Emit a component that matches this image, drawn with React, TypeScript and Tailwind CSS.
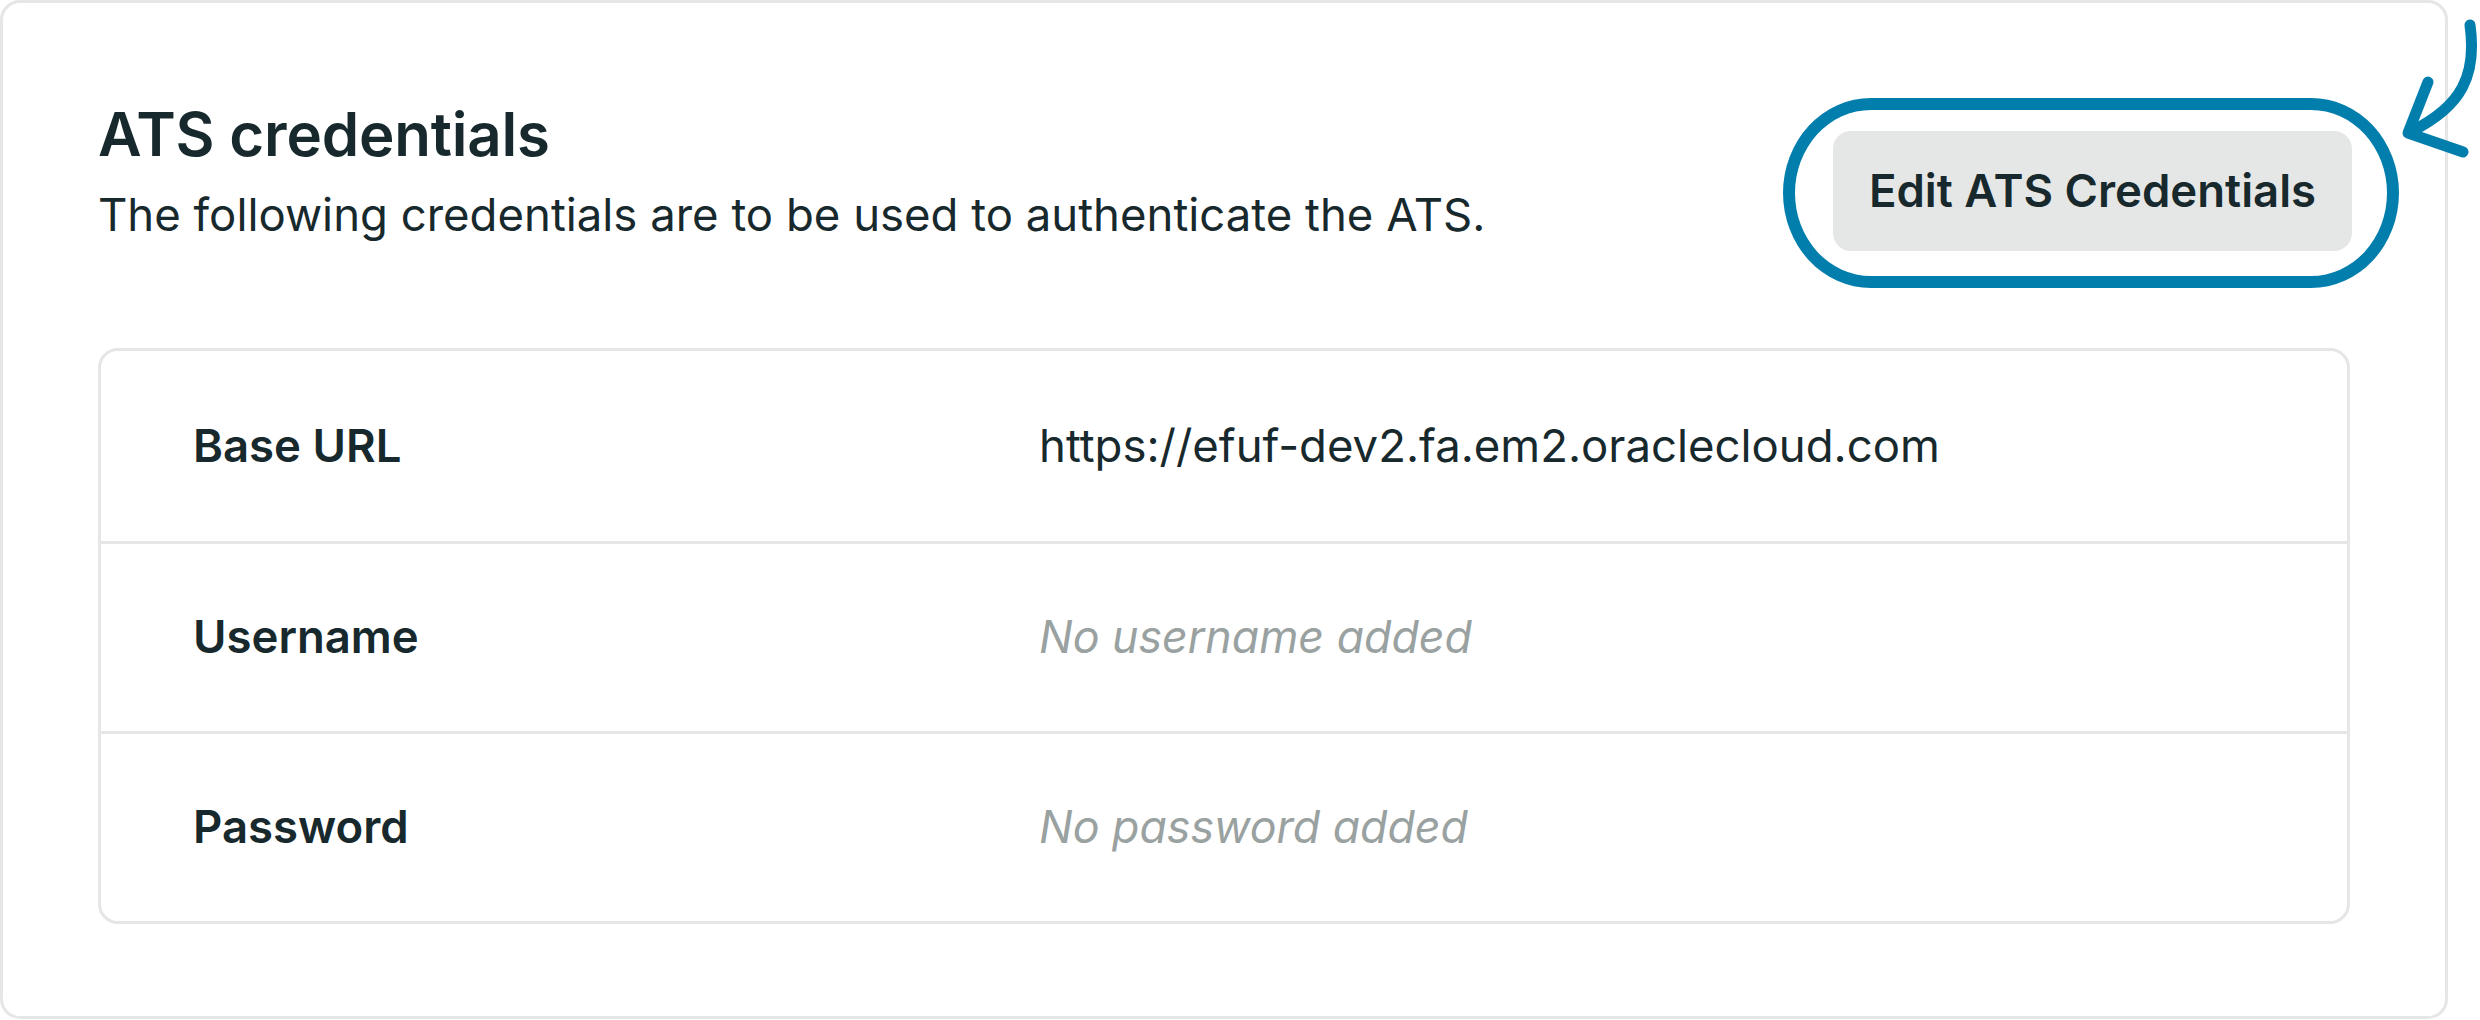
import React from "react";

const rows = [
  { label: "Base URL", value: "https://efuf-dev2.fa.em2.oraclecloud.com", empty: false },
  { label: "Username", value: "No username added", empty: true },
  { label: "Password", value: "No password added", empty: true },
];

export default function App() {
  return (
    <div
      className="relative w-[2480px] h-[1020px] bg-white text-[#18292d]"
      style={{ fontFamily: "Inter, 'Noto Sans', sans-serif" }}
    >
      <div className="w-[2448px] h-[1019px] rounded-[20px] border-[3px] border-[#e5e7e6] bg-white px-[95px] pt-[95px]">
        {/* Header */}
        <div className="flex items-start justify-between">
          <div>
            <h2 className="text-[60px] leading-[1.2] font-semibold tracking-[-0.2px]">
              ATS credentials
            </h2>
            <p className="mt-[18px] text-[45.5px] leading-[1.2]">
              The following credentials are to be used to authenticate the ATS.
            </p>
          </div>
          <div className="relative mt-[33px] mr-[-2px]">
            <button className="h-[120px] w-[519px] rounded-[18px] bg-[#e5e7e6] text-[45.5px] font-semibold text-[#18292d]">
              Edit ATS Credentials
            </button>
            {/* annotation ring */}
            <div className="pointer-events-none absolute -left-[50px] -right-[47px] -top-[33px] -bottom-[37px] rounded-[88px/95px] border-[12px] border-[#027ead]" />
          </div>
        </div>

        {/* Credentials table */}
        <div className="mt-[97px] rounded-[20px] border-[3px] border-[#e5e7e6]">
          {rows.map((r, i) => (
            <div
              key={r.label}
              className={`grid h-[190px] grid-cols-[846px_1fr] items-center px-[92px] ${
                i > 0 ? "border-t-[3px] border-[#e5e7e6]" : ""
              }`}
            >
              <span className="text-[45.5px] font-semibold">{r.label}</span>
              <span
                className={
                  r.empty
                    ? "text-[44.7px] italic text-[#9aa1a1]"
                    : "text-[45.5px] text-[#18292d]"
                }
              >
                {r.value}
              </span>
            </div>
          ))}
        </div>
      </div>

      {/* annotation arrow */}
      <svg
        className="pointer-events-none absolute left-[2380px] top-0"
        width="100"
        height="170"
        viewBox="2380 0 100 170"
        fill="none"
        stroke="#027ead"
        strokeWidth="11"
        strokeLinecap="round"
        strokeLinejoin="round"
      >
        <path d="M2470 25 C2477 75 2462 106 2412 131" />
        <path d="M2428 82 L2408 133 L2463 152" />
      </svg>
    </div>
  );
}
